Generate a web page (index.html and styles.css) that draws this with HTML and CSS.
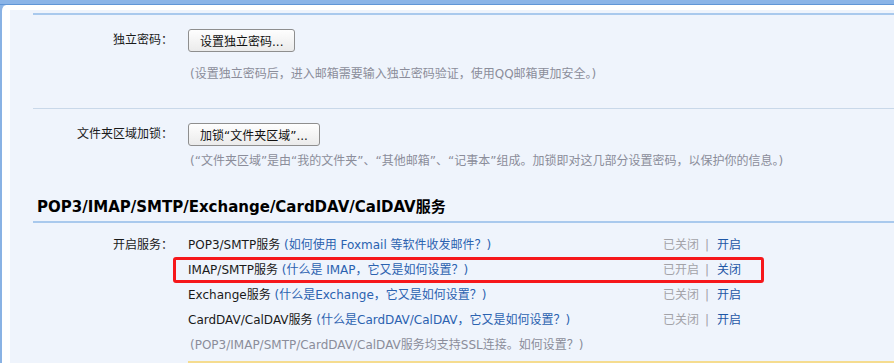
FILE: index.html
```html
<!DOCTYPE html>
<html lang="zh-CN">
<head>
    <meta charset="UTF-8">
    <title>账户设置</title>
    <link rel="stylesheet" href="styles.css">
</head>
<body>
<div class="topbar"></div>
<div class="frame">
    <div class="panel">
        <div class="rule-top"></div>

        <!-- 独立密码 -->
        <div class="block first">
            <div class="field">
                <div class="label">独立密码：</div>
                <div class="value">
                    <button class="btn">设置独立密码...</button>
                    <p class="hint hint-wide">(设置独立密码后，进入邮箱需要输入独立密码验证，使用QQ邮箱更加安全。)</p>
                </div>
            </div>
        </div>

        <!-- 文件夹区域加锁 -->
        <div class="block second">
            <div class="field">
                <div class="label">文件夹区域加锁：</div>
                <div class="value">
                    <button class="btn">加锁“文件夹区域”...</button>
                    <p class="hint hint-tight">(“文件夹区域”是由“我的文件夹”、“其他邮箱”、“记事本”组成。加锁即对这几部分设置密码，以保护你的信息。)</p>
                </div>
            </div>
        </div>

        <!-- services -->
        <h3 class="section-title">POP3/IMAP/SMTP/Exchange/CardDAV/CalDAV服务</h3>
        <div class="field services">
            <div class="label">开启服务：</div>
            <div class="value">
                <ul class="svc-list">
                    <li class="svc">
                        <span class="svc-name">POP3/SMTP服务 <a href="#">(如何使用 Foxmail 等软件收发邮件？)</a></span>
                        <span class="svc-state"><span class="state">已关闭</span><span class="sep">|</span><a href="#">开启</a></span>
                    </li>
                    <li class="svc marked">
                        <span class="svc-name">IMAP/SMTP服务 <a href="#">(什么是 IMAP，它又是如何设置？)</a></span>
                        <span class="svc-state"><span class="state">已开启</span><span class="sep">|</span><a href="#">关闭</a></span>
                    </li>
                    <li class="svc">
                        <span class="svc-name">Exchange服务 <a href="#">(什么是Exchange，它又是如何设置？)</a></span>
                        <span class="svc-state"><span class="state">已关闭</span><span class="sep">|</span><a href="#">开启</a></span>
                    </li>
                    <li class="svc">
                        <span class="svc-name">CardDAV/CalDAV服务 <a href="#">(什么是CardDAV/CalDAV，它又是如何设置？)</a></span>
                        <span class="svc-state"><span class="state">已关闭</span><span class="sep">|</span><a href="#">开启</a></span>
                    </li>
                    <li class="svc">
                        <span class="hint">(POP3/IMAP/SMTP/CardDAV/CalDAV服务均支持SSL连接。如何设置？)</span>
                    </li>
                </ul>
                <div class="notice"></div>
            </div>
        </div>
    </div>
</div>
</body>
</html>
```

FILE: styles.css
```css
*{
    box-sizing: border-box;
}

html,body{
    margin: 0;
    height: 100%;
    overflow: hidden;
}

body{
    background: #8ab4e7;
    font-family: "DejaVu Sans", "Noto Sans CJK SC", sans-serif;
    font-size: 12px;
    color: #1a1a1a;
}

/* FRAME */
.topbar{
    height: 5px;
    background: #8ab4e7;
    border-bottom: 1px solid #6096d6;
}

.frame{
    background: #fff;
    border-left: 2px solid #89b2e4;
    border-top-left-radius: 6px;
    padding: 5px 0 0 8px;
    height: calc(100% - 5px);
    overflow: hidden;
}

.panel{
    background: #eff4fc;
    height: 100%;
    padding: 3px 0 0 23px;
}

.rule-top{
    height: 2px;
    background: #a9c9ed;
}

/* FORM ROWS */
.block{
    border-bottom: 1px solid #c9d8e9;
}

.block.first{
    padding: 14px 0 25px;
}

.block.second{
    border-bottom: none;
    padding: 14px 0 0;
}

.field{
    display: grid;
    grid-template-columns: 155px 1fr;
}

.label{
    text-align: right;
    padding-right: 15px;
    line-height: 23px;
}

.btn{
    font: inherit;
    color: #111;
    height: 23px;
    padding: 0 11px;
    border: 1px solid #8e8e8e;
    border-radius: 3px;
    background: linear-gradient(#fefefe, #ebebeb);
    cursor: pointer;
}

.hint{
    color: #8b8d9a;
    margin: 0;
    line-height: 18px;
    padding-left: 2px;
}

.hint-wide{
    margin-top: 13px;
}

.hint-tight{
    margin-top: 6px;
}

/* SECTION */
.section-title{
    margin: 27px 0 0;
    padding: 0 0 4px 4px;
    font-size: 15px;
    line-height: 20px;
    color: #000;
    border-bottom: 2px solid #a9c9ed;
}

.services{
    padding-top: 10px;
}

.services .label{
    line-height: 25px;
}

.svc-list{
    list-style: none;
    margin: 0;
    padding: 0;
    width: 553px;
}

.svc{
    position: relative;
    display: flex;
    justify-content: space-between;
    line-height: 25px;
    white-space: nowrap;
}

.svc a{
    color: #2b62b0;
    text-decoration: none;
}

.svc .hint{
    padding-left: 2px;
    line-height: 25px;
}

.svc-state .state,
.svc-state .sep{
    color: #a3a3a8;
}

.svc-state .sep{
    margin: 0 8px 0 6px;
}

.svc-state a{
    color: #1f57a6;
}

/* red box round the row */
.marked::after{
    content: "";
    position: absolute;
    top: -1px;
    bottom: 0;
    left: -15px;
    right: -23px;
    border: 3px solid #f6171b;
    border-radius: 3px;
}

.notice{
    margin-top: 3px;
    border-top: 2px solid #f5dc8f;
}
```
